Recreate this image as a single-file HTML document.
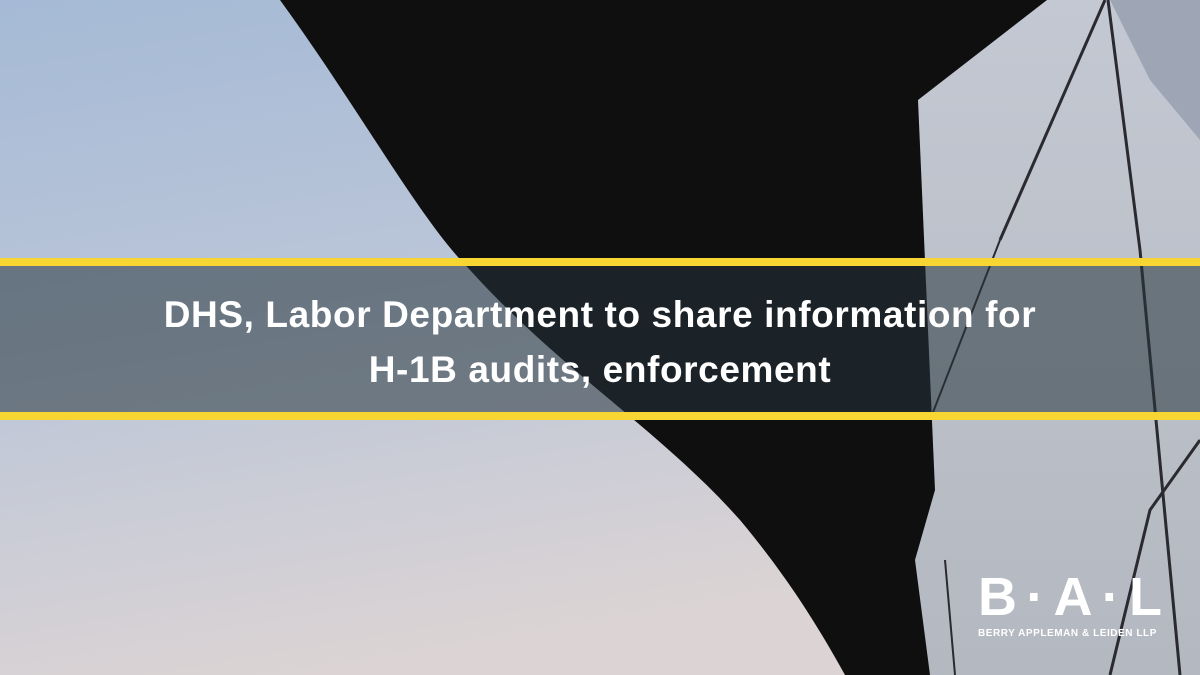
<!DOCTYPE html>
<html><head><meta charset="utf-8"><style>
html,body{margin:0;padding:0;width:1200px;height:675px;overflow:hidden;}
.wrap{position:relative;width:1200px;height:675px;}
svg{position:absolute;left:0;top:0;}
.band{position:absolute;left:0;top:266px;width:1200px;height:146px;background:rgba(38,52,60,0.55);}
.y{position:absolute;left:0;width:1200px;height:8px;background:#f7d533;}
.t{position:absolute;left:0;top:287px;width:1200px;text-align:center;color:#fff;font-family:"Liberation Sans",sans-serif;font-weight:bold;font-size:37px;line-height:55px;letter-spacing:0.6px;}
.logo{position:absolute;left:978px;top:572px;width:184px;color:#fff;font-family:"Liberation Sans",sans-serif;font-weight:bold;}
.big{font-size:54px;line-height:50px;display:flex;justify-content:space-between;}
.small{font-size:10px;letter-spacing:0.55px;margin-top:6px;white-space:nowrap;}
</style></head><body><div class="wrap">
<svg width="1200" height="675" viewBox="0 0 1200 675">
<defs>
<linearGradient id="sky" x1="0" y1="0" x2="0.3" y2="1">
<stop offset="0" stop-color="#a5bad6"/><stop offset="0.5" stop-color="#bcc6d8"/><stop offset="1" stop-color="#dcd4d4"/>
</linearGradient>
<linearGradient id="gl" x1="0" y1="0" x2="0" y2="1">
<stop offset="0" stop-color="#c3c8d2"/><stop offset="1" stop-color="#b4b8c0"/>
</linearGradient>
</defs>
<rect width="1200" height="675" fill="url(#sky)"/>
<path d="M280 0 C360 110 420 220 470 270 C560 370 660 430 740 520 C790 580 820 630 845 675 L1200 675 L1200 0 Z" fill="#0f0f10"/>
<path d="M1047 0 L1120 0 L1200 0 L1200 675 L930 675 L915 560 L935 490 L918 100 Z" fill="url(#gl)"/>
<path d="M1110 0 L1200 0 L1200 140 L1150 80 Z" fill="#9ea6b6"/>
<path d="M1108 0 L1140 250 L1180 675" stroke="#2a2a30" stroke-width="3" fill="none"/>
<path d="M1105 0 L1000 240" stroke="#2a2a30" stroke-width="3" fill="none"/>
<path d="M1000 240 L930 420" stroke="#2a2a30" stroke-width="2" fill="none"/>
<path d="M1200 440 L1150 510 L1110 675" stroke="#2a2a30" stroke-width="3" fill="none"/>
<path d="M955 675 L945 560" stroke="#2a2a30" stroke-width="2" fill="none"/>
</svg>
<div class="y" style="top:258px"></div>
<div class="band"></div>
<div class="y" style="top:412px"></div>
<div class="t">DHS, Labor Department to share information for<br>H-1B audits, enforcement</div>
<div class="logo"><div class="big"><span>B</span><span>·</span><span>A</span><span>·</span><span>L</span></div><div class="small">BERRY APPLEMAN &amp; LEIDEN LLP</div></div>
</div></body></html>
